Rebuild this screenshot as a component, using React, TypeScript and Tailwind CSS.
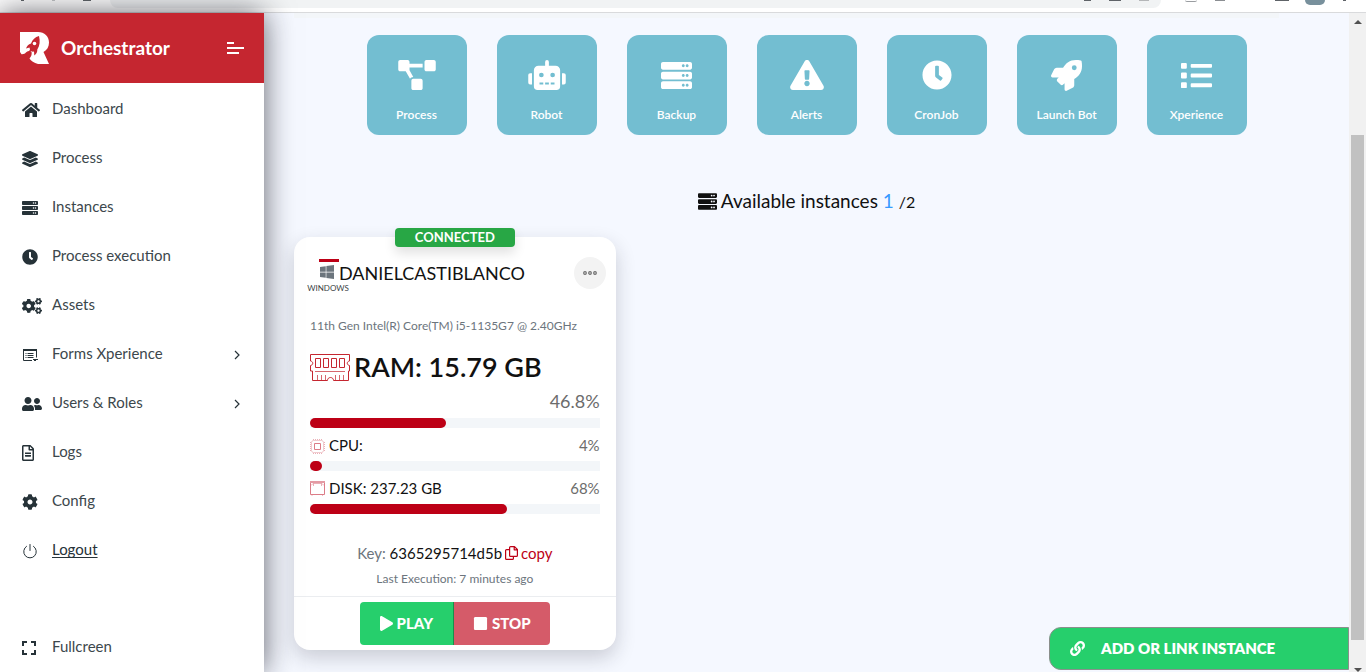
import type { ReactNode } from "react";
import type { IconType } from "react-icons";
import {
  FaClock,
  FaCog,
  FaCogs,
  FaExclamationTriangle,
  FaHome,
  FaLayerGroup,
  FaLink,
  FaList,
  FaPlay,
  FaProjectDiagram,
  FaRegFileAlt,
  FaRobot,
  FaRocket,
  FaServer,
  FaStop,
  FaUserFriends,
  FaWindows,
} from "react-icons/fa";

function LogoIcon() {
  return (
    <svg viewBox="0 0 30 32" className="h-8 w-[30px]" aria-hidden="true">
      <path
        fill="#fff"
        d="M0 0h18c6.500 0 11 4.500 11 10.500 0 4.500-2 7.500-5.500 9.500L29 32H18c-4-1-7-3-8.500-5.500C11.500 24 12 22.500 11.500 19.500L9 19c-3 0-3 3.500-7.500 3.200L0 20z"
      />
      <path
        fill="#c52630"
        d="M19 4c-4 1-6.500 3.500-8 7.500-2.500.5-4 2.500-5 5l3.500-1 .5 2-2 3.500 3.500-2 1 .8 1.500-.3.300 4c2-1.500 3.200-3.500 3-6 2.500-3.500 3-8.500 1.700-13.500z"
      />
      <circle cx="14.500" cy="11.500" r="1.800" fill="#fff" />
    </svg>
  );
}

function MenuIcon() {
  return (
    <svg viewBox="0 0 17 12" className="h-3 w-[17px]" aria-hidden="true">
      <path stroke="#fff" strokeWidth="2" d="M0 1h7M0 6h17M0 11h12" />
    </svg>
  );
}

function FormIcon() {
  return (
    <svg viewBox="0 0 16 14" className="ml-px h-[14px] w-4" fill="none" stroke="currentColor" aria-hidden="true">
      <path d="M9 12.500H.5v-11h13v8" />
      <path strokeWidth="2" d="M0 2h14" />
      <path d="M2.500 5.500h1M2.500 7.500h1M2.500 9.500h1M4.500 5.500h6M4.500 7.500h6M4.500 9.500h6M10 11.500h5M11 12.500h2" />
    </svg>
  );
}

function PowerIcon() {
  return (
    <svg viewBox="0 0 16 16" className="size-4" fill="none" stroke="currentColor" strokeLinecap="round" aria-hidden="true">
      <path d="M8 1.500v6M4.500 3.300a6.300 6.300 0 1 0 7 0" />
    </svg>
  );
}

function CornersIcon() {
  return (
    <svg viewBox="0 0 14 14" className="size-[14px]" fill="none" stroke="currentColor" strokeWidth="2" aria-hidden="true">
      <path d="M1 5V1h4M9 1h4v4M13 9v4H9M5 13H1V9" />
    </svg>
  );
}

function ChevronIcon() {
  return (
    <svg viewBox="0 0 6 10" className="h-[10px] w-[6px]" fill="none" stroke="currentColor" strokeWidth="1.200" aria-hidden="true">
      <path d="M1 1l4 4-4 4" />
    </svg>
  );
}

function RamIcon() {
  return (
    <svg viewBox="0 0 40 27" className="h-[27px] w-10" fill="none" stroke="#c52630" aria-hidden="true">
      <path d="M.5 7V.5h39V7c-3 .5-3 4 0 4.500V17h-1v9.500h-15c0-4-6-4-6 0h-15V17h-2v-5.500c3-.5 3-4 0-4.500z" />
      <path d="M5.500 4.500h5v9h-5zM13.500 4.500h5v9h-5zM21.500 4.500h5v9h-5zM29.500 4.500h5v9h-5z" />
      <path opacity=".7" d="M5 17.500h30M7.500 21v5M11.500 21v5M15.500 21v5M25.500 21v5M29.500 21v5M33.500 21v5" />
    </svg>
  );
}

function CpuIcon() {
  return (
    <svg viewBox="0 0 15 15" className="mt-[2px] size-[15px]" fill="none" stroke="#dc7c87" aria-hidden="true">
      <rect opacity=".4" x="1.500" y="1.500" width="12" height="12" rx="2" />
      <path opacity=".6" strokeDasharray="1 1" d="M3 .5h9M3 14.500h9M.5 3v9M14.500 3v9" />
      <path d="M4.500 4.500h6v6h-6z" />
    </svg>
  );
}

function DiskIcon() {
  return (
    <svg viewBox="0 0 15 15" className="size-[15px]" fill="none" stroke="#dc7c87" aria-hidden="true">
      <path d="M.5 1v12.500h14V1M2 13.500v1M12.500 13.500v1" />
      <path stroke="#e49aa3" strokeWidth="2" d="M0 1h15" />
      <path opacity=".6" d="M1 4.500l2-2h9l2 2M3.500 3v2M11.500 3v2" />
    </svg>
  );
}

function CopyIcon() {
  return (
    <svg viewBox="0 0 13 14" className="h-[14px] w-[13px]" fill="none" stroke="currentColor" strokeWidth="1.200" strokeLinejoin="round" aria-hidden="true">
      <path d="M5.600 .6h3.900l2.900 2.900v5.900q0 1-1 1H5.600q-1 0-1-1V1.600q0-1 1-1zM9.200 .8v3h3M4.400 3.600H1.600q-1 0-1 1v7.800q0 1 1 1h5.800q1 0 1-1v-1.800" />
    </svg>
  );
}

function DotsIcon() {
  return (
    <svg viewBox="0 0 14 4" className="h-1 w-[14px]" fill="none" stroke="#6c6c6c" strokeWidth="1.200" aria-hidden="true">
      <circle cx="2" cy="2" r="1.300" />
      <circle cx="7" cy="2" r="1.300" />
      <circle cx="12" cy="2" r="1.300" />
    </svg>
  );
}

type NavItem = { label: string; icon: ReactNode; expandable?: boolean; underlined?: boolean };

const NAV_ITEMS: NavItem[] = [
  { label: "Dashboard", icon: <FaHome className="size-[18px]" /> },
  { label: "Process", icon: <FaLayerGroup className="size-4" /> },
  { label: "Instances", icon: <FaServer className="size-4" /> },
  { label: "Process execution", icon: <FaClock className="size-4" /> },
  { label: "Assets", icon: <FaCogs className="h-4 w-5" /> },
  { label: "Forms Xperience", icon: <FormIcon />, expandable: true },
  { label: "Users & Roles", icon: <FaUserFriends className="h-4 w-5" />, expandable: true },
  { label: "Logs", icon: <FaRegFileAlt className="h-4 w-3" /> },
  { label: "Config", icon: <FaCog className="size-4" /> },
  { label: "Logout", icon: <PowerIcon />, underlined: true },
];

const SHORTCUTS: { label: string; icon: IconType; size: string }[] = [
  { label: "Process", icon: FaProjectDiagram, size: "h-[30px] w-[38px]" },
  { label: "Robot", icon: FaRobot, size: "h-[30px] w-[38px]" },
  { label: "Backup", icon: FaServer, size: "size-[31px]" },
  { label: "Alerts", icon: FaExclamationTriangle, size: "h-[30px] w-[34px]" },
  { label: "CronJob", icon: FaClock, size: "size-[30px]" },
  { label: "Launch Bot", icon: FaRocket, size: "size-[31px]" },
  { label: "Xperience", icon: FaList, size: "size-[31px]" },
];

function BrowserBar() {
  return (
    <div className="flex h-[13px] shrink-0 items-start overflow-hidden border-b border-[#d9dadc] bg-white pr-5">
      <div className="flex w-[110px] gap-7 pl-[21px]">
        <span className="h-px w-[3px] bg-[#5f6368]" />
        <span className="h-px w-[3px] bg-[#c4c6c8]" />
        <span className="h-px w-2 bg-[#5f6368]" />
      </div>
      <div className="flex h-2 flex-1 items-start justify-end gap-[18px] rounded-b-full bg-[#f1f3f4] pr-3">
        <span className="h-px w-[7px] bg-[#5f6368]" />
        <span className="h-px w-3 bg-[#5f6368]" />
        <span className="h-px w-[10px] bg-[#b4b6b8]" />
      </div>
      <div className="flex w-[185px] items-start justify-end gap-[18px]">
        <span className="h-[2px] w-3 rounded-b-full border-b border-[#9a9da1]" />
        <span className="mr-8 h-px w-[10px] bg-[#8b8e92]" />
        <span className="h-px w-[14px] bg-[#5f6368]" />
        <span className="-ml-[2px] h-[5px] w-5 rounded-b-full bg-[#78909c]" />
        <span className="h-px w-[3px] bg-[#5f6368]" />
      </div>
    </div>
  );
}

function NavRow({ item }: { item: NavItem }) {
  return (
    <a href="#" className="flex h-[49px] items-center pr-6 pl-[22px] text-[#263238]">
      <span className="flex w-[30px] items-center pt-[2px]">{item.icon}</span>
      <span className={item.underlined ? "flex-1 underline underline-offset-2" : "flex-1 text-[#3c474c]"}>{item.label}</span>
      {item.expandable && (
        <span className="pt-[2px]">
          <ChevronIcon />
        </span>
      )}
    </a>
  );
}

function Sidebar() {
  return (
    <aside className="z-10 flex w-[264px] shrink-0 flex-col bg-white text-[15px] shadow-[0_0_28px_rgba(20,20,30,0.65)]">
      <div className="mb-px flex h-[70px] shrink-0 items-center bg-[#c52630] pr-5 pl-5">
        <LogoIcon />
        <span className="ml-[11px] flex-1 text-[19px] font-bold text-white">Orchestrator</span>
        <button type="button" aria-label="Toggle menu">
          <MenuIcon />
        </button>
      </div>
      <nav className="flex flex-1 flex-col">
        {NAV_ITEMS.map((item) => (
          <NavRow key={item.label} item={item} />
        ))}
        <div className="mt-auto pb-px">
          <NavRow item={{ label: "Fullcreen", icon: <CornersIcon /> }} />
        </div>
      </nav>
    </aside>
  );
}

function UsageBar({ label, percent }: { label: string; percent: number }) {
  return (
    <div role="progressbar" aria-label={label} aria-valuenow={percent} className="h-[10px] bg-[#f3f6f9]">
      <div className="h-full rounded-[5px] bg-[#bd0016]" style={{ width: `${percent}%` }} />
    </div>
  );
}

function InstanceCard() {
  return (
    <article className="relative rounded-2xl bg-white shadow-[0_8px_20px_rgba(30,30,45,0.2)]">
      <span className="absolute -top-[9px] left-1/2 h-[19px] w-[120px] -translate-x-1/2 rounded bg-[#28a745] text-center text-[13px] leading-[19px] font-bold text-white shadow-[0_6px_12px_rgba(0,0,0,0.12)]">
        CONNECTED
      </span>
      <div className="px-4 pt-5">
        <div className="flex h-[60px] items-start">
          <div className="-ml-[5px] flex w-[34px] flex-col items-center pt-[2px]">
            <span className="ml-[13px] h-[3px] w-5 bg-[#bd0016]" />
            <FaWindows className="mt-[2px] ml-[9px] size-4 text-[#6c757d]" />
            <span className="mt-1 ml-3 text-[8px] leading-2 text-[#3a3f44]">WINDOWS</span>
          </div>
          <h2 className="flex-1 text-lg leading-8 text-[#111]">DANIELCASTIBLANCO</h2>
          <button type="button" aria-label="More options" className="-mr-[6px] flex size-8 items-center justify-center rounded-full bg-[#f3f3f3]">
            <DotsIcon />
          </button>
        </div>
        <p className="text-xs leading-[18px] text-[#6c757d]">11th Gen Intel(R) Core(TM) i5-1135G7 @ 2.40GHz</p>
        <div className="mt-3 flex h-10 items-center gap-1">
          <RamIcon />
          <strong className="text-[27px] font-semibold text-[#111]">RAM: 15.79 GB</strong>
        </div>
        <p className="pb-[3px] text-right text-lg leading-7 text-[#6c6c6c]">46.8%</p>
        <UsageBar label="RAM usage" percent={46.8} />
        <div className="flex h-[33px] items-center gap-1 pt-[2px] text-[15px]">
          <CpuIcon />
          <span className="flex-1 text-[#111]">CPU:</span>
          <span className="text-[#6c6c6c]">4%</span>
        </div>
        <UsageBar label="CPU usage" percent={4} />
        <div className="flex h-[33px] items-center gap-1 pt-[2px] text-[15px]">
          <DiskIcon />
          <span className="flex-1 text-[#111]">DISK: 237.23 GB</span>
          <span className="text-[#6c6c6c]">68%</span>
        </div>
        <UsageBar label="Disk usage" percent={68} />
        <p className="mt-[27px] flex items-center justify-center gap-[3px] text-[15px] leading-6 text-[#6c757d]">
          <span>
            Key: <span className="text-[#111]">6365295714d5b</span>
          </span>
          <a href="#" className="flex items-center gap-[3px] text-[#bd0016]">
            <CopyIcon />
            copy
          </a>
        </p>
        <p className="mt-[5px] pb-2 text-center text-xs leading-[18px] text-[#6c757d]">Last Execution: 7 minutes ago</p>
      </div>
      <div className="flex justify-center border-t border-[#ebedf0] pt-[5px] pb-[5px] text-[15px] font-black text-white">
        <button type="button" className="flex h-[43px] w-[94px] items-center justify-center gap-1 rounded-l border-r border-[#1b8e4b] bg-[#26cf6c]">
          <FaPlay className="h-[15px] w-[13px]" />
          PLAY
        </button>
        <button type="button" className="flex h-[43px] w-24 items-center justify-center gap-1 rounded-r bg-[#d55b69]">
          <FaStop className="size-[15px]" />
          STOP
        </button>
      </div>
    </article>
  );
}

function Scrollbar() {
  return (
    <div className="flex w-[17px] shrink-0 flex-col items-center justify-between bg-[#f1f1f1] pt-[7px]" aria-hidden="true">
      <span className="border-x-4 border-b-4 border-x-transparent border-b-[#505050]" />
      <span className="mt-[111px] mb-7 w-[13px] flex-1 bg-[#c1c1c1]" />
      <span className="border-x-4 border-t-4 border-x-transparent border-t-[#505050]" />
    </div>
  );
}

export default function App() {
  return (
    <div className="flex h-screen flex-col overflow-hidden font-['Lato',sans-serif] text-[#111]">
      <BrowserBar />
      <div className="flex min-h-0 flex-1">
        <Sidebar />
        <main className="relative min-w-0 flex-1 bg-[#f5f8ff] px-[30px]">
          <div className="mr-10 h-[5px] bg-[#f3f6f9]" />
          <section className="flex justify-center gap-[30px] pt-[17px]">
            {SHORTCUTS.map(({ label, icon: Icon, size }) => (
              <button
                key={label}
                type="button"
                className="flex size-[100px] flex-col items-center rounded-xl bg-[#73bed1] pt-6 text-xs font-semibold text-white"
              >
                <span className="flex h-8 items-center">
                  <Icon className={size} />
                </span>
                <span className="mt-4 leading-4">{label}</span>
              </button>
            ))}
          </section>
          <h1 className="mt-[52px] flex h-7 items-center justify-center gap-1 text-[19px]">
            <FaServer className="size-[19px]" />
            <span>
              Available instances <span className="text-[#3699ff]">1</span> <span className="text-base">/2</span>
            </span>
          </h1>
          <section className="mt-[22px] grid grid-cols-3 gap-[30px]">
            <InstanceCard />
          </section>
          <button
            type="button"
            className="absolute right-0 bottom-[2px] flex h-[43px] w-[300px] items-center gap-4 rounded-l-xl border border-[#8a8f8c] bg-[#26cf6c] pl-5 text-[15px] font-extrabold text-white"
          >
            <FaLink className="size-[15px]" />
            ADD OR LINK INSTANCE
          </button>
        </main>
        <Scrollbar />
      </div>
    </div>
  );
}
